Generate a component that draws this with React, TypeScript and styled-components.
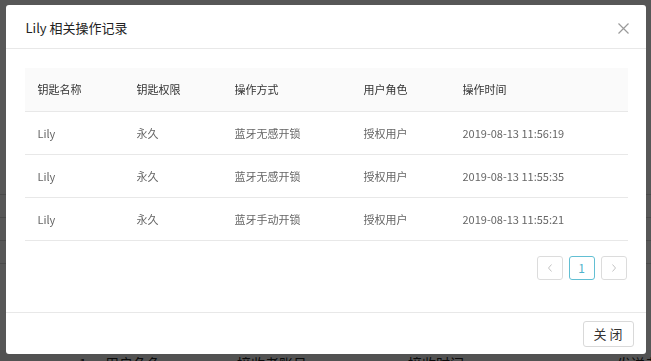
import React from "react";
import styled, { createGlobalStyle } from "styled-components";

const GlobalStyle = createGlobalStyle`
  html, body { margin: 0; padding: 0; }
  body {
    font-family: "Noto Sans CJK SC", "Noto Sans", sans-serif;
    background: #fff;
    overflow: hidden;
  }
`;

const BgPage = styled.div`
  width: 651px;
  height: 100vh;
  overflow: hidden;
  display: flex;
  flex-direction: column;
  background: #fff;
`;

const BgTop = styled.div`
  height: 172px;
  flex-shrink: 0;
`;

const BgLine = styled.div`
  height: 22px;
  flex-shrink: 0;
  border-bottom: 1px solid #d8d8d8;
`;

const BgSpacer = styled.div`
  height: 86px;
  flex-shrink: 0;
`;

const BgTableHead = styled.div`
  display: grid;
  grid-template-columns: 26px 132px 171px 209px 1fr;
  padding-left: 79px;
  height: 26px;
  flex-shrink: 0;
  align-items: center;
  font-size: 14px;
  color: #222;
  background: #f0f0f0;
  white-space: nowrap;
`;

const Mask = styled.div`
  position: fixed;
  inset: 0;
  background: rgba(0, 0, 0, 0.66);
`;

const ModalWrap = styled.div`
  position: fixed;
  inset: 0;
  display: flex;
  justify-content: center;
  align-items: flex-start;
  padding-top: 5px;
`;

const Modal = styled.div`
  width: 640px;
  background: #fff;
  border-radius: 3px;
  display: flex;
  flex-direction: column;
`;

const Header = styled.div`
  height: 43px;
  padding: 0 20px;
  display: flex;
  align-items: center;
  justify-content: space-between;
  border-bottom: 1px solid #e8e8e8;
`;

const Title = styled.div`
  font-size: 13px;
  color: #222;
  padding-top: 2px;
`;

const CloseX = styled.button`
  border: 0;
  background: transparent;
  padding: 0;
  width: 14px;
  height: 14px;
  margin-right: -5px;
  margin-top: 3px;
  display: flex;
  align-items: center;
  justify-content: center;
  cursor: pointer;
`;

const Body = styled.div`
  padding: 19px 18px 32px 19px;
`;

const Table = styled.table`
  width: 100%;
  border-collapse: collapse;
  table-layout: fixed;
  font-size: 11px;
`;

const Th = styled.th<{ $w?: number }>`
  box-sizing: border-box;
  width: ${(p) => (p.$w ? `${p.$w}px` : "auto")};
  height: 43px;
  padding: 0 0 0 13px;
  text-align: left;
  font-weight: 400;
  color: #333;
  background: #fafafa;
  border-bottom: 1px solid #e8e8e8;
`;

const Td = styled.td`
  box-sizing: border-box;
  height: 43px;
  padding: 0 0 0 13px;
  color: #666;
  border-bottom: 1px solid #e8e8e8;
  white-space: nowrap;
`;

const Pager = styled.div`
  display: flex;
  justify-content: flex-end;
  gap: 6px;
  margin-top: 15px;
  padding-right: 1px;
`;

const PageBtn = styled.button<{ $active?: boolean }>`
  width: 26px;
  height: 24px;
  box-sizing: border-box;
  border: 1px solid ${(p) => (p.$active ? "#62bfd3" : "#dcdcdc")};
  border-radius: 3px;
  background: #fff;
  color: ${(p) => (p.$active ? "#4fb3cb" : "#bbb")};
  font-family: inherit;
  font-size: 12px;
  padding: 0;
  display: flex;
  align-items: center;
  justify-content: center;
`;

const Footer = styled.div`
  border-top: 1px solid #e8e8e8;
  padding: 8px 12px 7px;
  display: flex;
  justify-content: flex-end;
`;

const FooterBtn = styled.button`
  width: 51px;
  height: 26px;
  box-sizing: border-box;
  border: 1px solid #d9d9d9;
  border-radius: 3px;
  background: #fff;
  color: #333;
  font-family: inherit;
  font-size: 13px;
  letter-spacing: 3px;
  padding: 0 0 0 3px;
`;

const Chevron = ({ dir }: { dir: "l" | "r" }) => (
  <svg width="8" height="10" viewBox="0 0 8 10" fill="none">
    {dir === "l" ? (
      <path d="M5.5 1.5 L2.5 5 L5.5 8.5" stroke="#c4c4c4" strokeWidth="1" />
    ) : (
      <path d="M2.5 1.5 L5.5 5 L2.5 8.5" stroke="#c4c4c4" strokeWidth="1" />
    )}
  </svg>
);

const rows = [
  ["Lily", "永久", "蓝牙无感开锁", "授权用户", "2019-08-13 11:56:19"],
  ["Lily", "永久", "蓝牙无感开锁", "授权用户", "2019-08-13 11:55:35"],
  ["Lily", "永久", "蓝牙手动开锁", "授权用户", "2019-08-13 11:55:21"],
];

export default function App() {
  return (
    <>
      <GlobalStyle />
      <BgPage>
        <BgTop />
        <BgLine />
        <BgLine />
        <BgLine />
        <BgLine />
        <BgSpacer />
        <BgTableHead>
          <span>1</span>
          <span>用户角色</span>
          <span>接收者账号</span>
          <span>接收时间</span>
          <span>发送者</span>
        </BgTableHead>
      </BgPage>
      <Mask />
      <ModalWrap>
        <Modal>
          <Header>
            <Title>Lily 相关操作记录</Title>
            <CloseX aria-label="close">
              <svg width="11" height="11" viewBox="0 0 11 11">
                <path d="M0.5 0.5 L10.5 10.5 M10.5 0.5 L0.5 10.5" stroke="#9a9a9a" strokeWidth="1.2" />
              </svg>
            </CloseX>
          </Header>
          <Body>
            <Table>
              <thead>
                <tr>
                  <Th $w={99}>钥匙名称</Th>
                  <Th $w={98}>钥匙权限</Th>
                  <Th $w={129}>操作方式</Th>
                  <Th $w={99}>用户角色</Th>
                  <Th>操作时间</Th>
                </tr>
              </thead>
              <tbody>
                {rows.map((r, i) => (
                  <tr key={i}>
                    {r.map((c, j) => (
                      <Td key={j}>{c}</Td>
                    ))}
                  </tr>
                ))}
              </tbody>
            </Table>
            <Pager>
              <PageBtn aria-label="prev">
                <Chevron dir="l" />
              </PageBtn>
              <PageBtn $active>1</PageBtn>
              <PageBtn aria-label="next">
                <Chevron dir="r" />
              </PageBtn>
            </Pager>
          </Body>
          <Footer>
            <FooterBtn>关闭</FooterBtn>
          </Footer>
        </Modal>
      </ModalWrap>
    </>
  );
}
